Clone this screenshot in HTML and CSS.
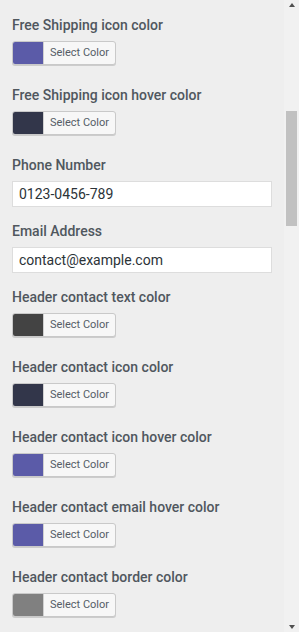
FILE: index.html
```html
<!DOCTYPE html>
<html lang="en">
<head>
    <meta charset="UTF-8">
    <meta name="viewport" content="width=device-width, initial-scale=1.0">
    <title>Customizer</title>
    <link rel="stylesheet" href="styles.css">
</head>
<body>
    <div class="panel">
        <div class="control color">
            <label>Free Shipping icon color</label>
            <button class="picker"><span class="swatch" style="background:#5b5ba8"></span><span class="txt">Select Color</span></button>
        </div>
        <div class="control color">
            <label>Free Shipping icon hover color</label>
            <button class="picker"><span class="swatch" style="background:#32364a"></span><span class="txt">Select Color</span></button>
        </div>
        <div class="control text">
            <label>Phone Number</label>
            <input type="text" value="0123-0456-789">
        </div>
        <div class="control text">
            <label>Email Address</label>
            <input type="text" value="contact@example.com">
        </div>
        <div class="control color">
            <label>Header contact text color</label>
            <button class="picker"><span class="swatch" style="background:#434343"></span><span class="txt">Select Color</span></button>
        </div>
        <div class="control color">
            <label>Header contact icon color</label>
            <button class="picker"><span class="swatch" style="background:#32364a"></span><span class="txt">Select Color</span></button>
        </div>
        <div class="control color">
            <label>Header contact icon hover color</label>
            <button class="picker"><span class="swatch" style="background:#5b5ba8"></span><span class="txt">Select Color</span></button>
        </div>
        <div class="control color">
            <label>Header contact email hover color</label>
            <button class="picker"><span class="swatch" style="background:#5b5ba8"></span><span class="txt">Select Color</span></button>
        </div>
        <div class="control color">
            <label>Header contact border color</label>
            <button class="picker"><span class="swatch" style="background:#808080"></span><span class="txt">Select Color</span></button>
        </div>
    </div>

    <div class="scrollbar">
        <div class="arrow up"></div>
        <div class="track"><div class="thumb"></div></div>
        <div class="arrow down"></div>
    </div>
</body>
</html>
```

FILE: styles.css
```css
html, body {
    margin: 0;
    height: 632px;
    overflow: hidden;
}
body {
    display: flex;
    font-family: Roboto, "Liberation Sans", sans-serif;
    background: #eeeeee;
}
.panel {
    flex: 1;
    padding: 15px 12px 0 12px;
    background: #eeeeee;
}
.control label {
    display: block;
    font-size: 14px;
    font-weight: 500;
    line-height: 20px;
    color: #50575e;
    margin-bottom: 6px;
}
.control.color { margin-bottom: 20px; }
.control.text { margin-bottom: 14px; }

.picker {
    display: flex;
    align-items: stretch;
    height: 24px;
    width: 104px;
    padding: 0;
    border: 1px solid #c9c9c9;
    border-radius: 3px;
    background: #f7f7f7;
    box-shadow: 0 1px 0 #cccccc;
    overflow: hidden;
    cursor: pointer;
    font-family: inherit;
}
.swatch {
    width: 30px;
    border-right: 1px solid #d0d0d0;
}
.txt {
    flex: 1;
    font-size: 11px;
    line-height: 22px;
    color: #555d66;
    text-align: center;
}
input {
    display: block;
    box-sizing: border-box;
    width: 260px;
    height: 26px;
    margin: 0;
    padding: 0 6px;
    border: 1px solid #dddddd;
    background: #ffffff;
    font-family: inherit;
    font-size: 14px;
    color: #2c3338;
}

.scrollbar {
    width: 15px;
    display: flex;
    flex-direction: column;
    background: #f1f1f1;
}
.arrow {
    height: 15px;
    display: flex;
    justify-content: center;
    align-items: center;
}
.arrow::before {
    content: "";
    border-left: 3.5px solid transparent;
    border-right: 3.5px solid transparent;
}
.arrow.up::before { border-bottom: 4px solid #505050; }
.arrow.down::before { border-top: 4px solid #505050; }
.arrow.up { align-items: flex-start; padding-top: 3px; height: 12px; }
.arrow.down { align-items: flex-end; padding-bottom: 3px; height: 12px; }
.track { flex: 1; }
.thumb {
    margin: 96px 2px 0 2px;
    height: 115px;
    background: #c1c1c1;
}
```
